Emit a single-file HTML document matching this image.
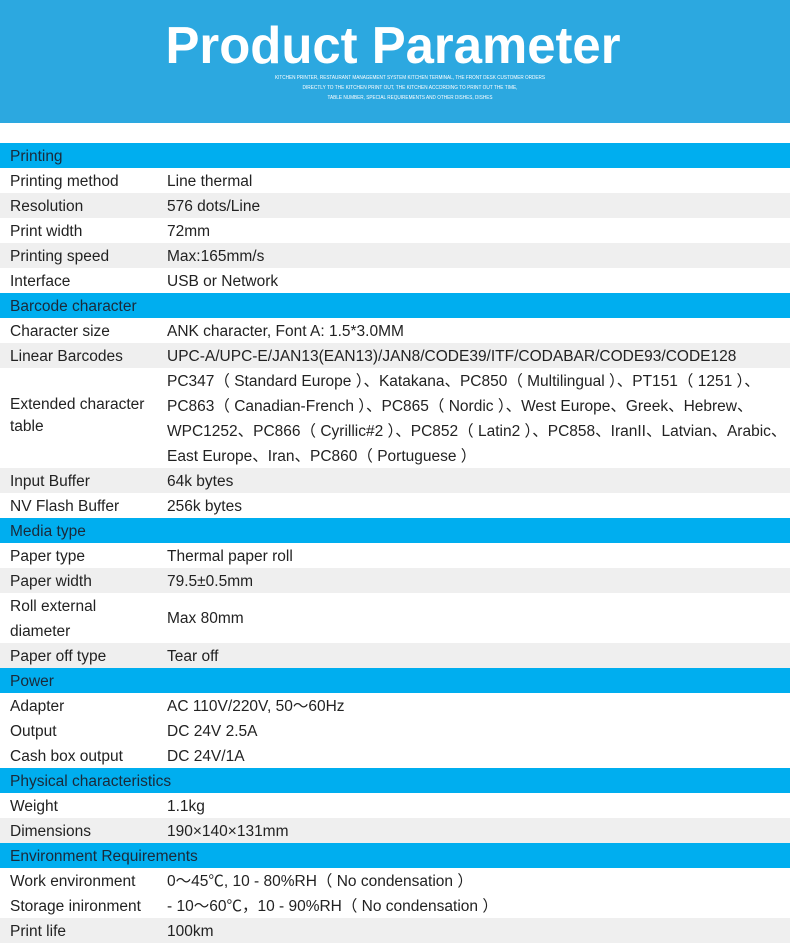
<!DOCTYPE html>
<html><head><meta charset="utf-8"><style>
*{margin:0;padding:0;box-sizing:border-box}
body{width:790px;height:947px;background:#fff;overflow:hidden;position:relative;font-family:"Liberation Sans","Noto Sans CJK SC",sans-serif;color:#222;font-size:15.5px}
.hd{position:absolute;left:0;top:0;width:790px;height:123px;background:#2ca8e0}
.r{position:absolute;left:0;width:790px;height:25px;line-height:27px;white-space:nowrap}
.s{background:#00aeef;color:#1a2a3a}
.g{background:#efefef}
.w{background:#fff}
.a{position:absolute;left:10px;top:0}
.b{position:absolute;left:167px;top:0}
</style></head><body>
<div class="hd">
<svg width="790" height="123" style="position:absolute;left:0;top:0">
<text x="393" y="63" text-anchor="middle" font-family="Liberation Sans" font-weight="bold" font-size="52" fill="#fff" textLength="455" lengthAdjust="spacingAndGlyphs">Product Parameter</text>
<text x="410" y="79" text-anchor="middle" font-family="Liberation Sans" font-size="5" fill="#fff" textLength="270" lengthAdjust="spacingAndGlyphs">KITCHEN PRINTER, RESTAURANT MANAGEMENT SYSTEM KITCHEN TERMINAL, THE FRONT DESK CUSTOMER ORDERS</text>
<text x="410" y="89" text-anchor="middle" font-family="Liberation Sans" font-size="5" fill="#fff" textLength="215" lengthAdjust="spacingAndGlyphs">DIRECTLY TO THE KITCHEN PRINT OUT, THE KITCHEN ACCORDING TO PRINT OUT THE TIME,</text>
<text x="410" y="99" text-anchor="middle" font-family="Liberation Sans" font-size="5" fill="#fff" textLength="165" lengthAdjust="spacingAndGlyphs">TABLE NUMBER, SPECIAL REQUIREMENTS AND OTHER DISHES, DISHES</text>
</svg></div>

<div class="r s" style="top:143px"><span class="a">Printing</span></div>
<div class="r w" style="top:168px"><span class="a">Printing method</span><span class="b">Line thermal</span></div>
<div class="r g" style="top:193px"><span class="a">Resolution</span><span class="b">576 dots/Line</span></div>
<div class="r w" style="top:218px"><span class="a">Print width</span><span class="b">72mm</span></div>
<div class="r g" style="top:243px"><span class="a">Printing speed</span><span class="b">Max:165mm/s</span></div>
<div class="r w" style="top:268px"><span class="a">Interface</span><span class="b">USB or Network</span></div>
<div class="r s" style="top:293px"><span class="a">Barcode character</span></div>
<div class="r w" style="top:318px"><span class="a">Character size</span><span class="b">ANK character, Font A: 1.5*3.0MM</span></div>
<div class="r g" style="top:343px"><span class="a">Linear Barcodes</span><span class="b">UPC-A/UPC-E/JAN13(EAN13)/JAN8/CODE39/ITF/CODABAR/CODE93/CODE128</span></div>
<div class="r w" style="top:368px;height:100px">
<span class="a" style="top:26px;line-height:22px;white-space:normal;width:150px">Extended character table</span>
<span class="b">PC347（ Standard Europe ）、Katakana、PC850（ Multilingual ）、PT151（ 1251 ）、</span>
<span class="b" style="top:25px">PC863（ Canadian-French ）、PC865（ Nordic ）、West Europe、Greek、Hebrew、</span>
<span class="b" style="top:50px">WPC1252、PC866（ Cyrillic#2 ）、PC852（ Latin2 ）、PC858、IranII、Latvian、Arabic、</span>
<span class="b" style="top:75px">East Europe、Iran、PC860（ Portuguese ）</span>
</div>
<div class="r g" style="top:468px"><span class="a">Input Buffer</span><span class="b">64k bytes</span></div>
<div class="r w" style="top:493px"><span class="a">NV Flash Buffer</span><span class="b">256k bytes</span></div>
<div class="r s" style="top:518px"><span class="a">Media type</span></div>
<div class="r w" style="top:543px"><span class="a">Paper type</span><span class="b">Thermal paper roll</span></div>
<div class="r g" style="top:568px"><span class="a">Paper width</span><span class="b">79.5±0.5mm</span></div>
<div class="r w" style="top:593px;height:50px"><span class="a">Roll external</span><span class="a" style="top:25px">diameter</span><span class="b" style="top:12px">Max 80mm</span></div>
<div class="r g" style="top:643px"><span class="a">Paper off type</span><span class="b">Tear off</span></div>
<div class="r s" style="top:668px"><span class="a">Power</span></div>
<div class="r w" style="top:693px"><span class="a">Adapter</span><span class="b">AC 110V/220V, 50～60Hz</span></div>
<div class="r w" style="top:718px"><span class="a">Output</span><span class="b">DC 24V 2.5A</span></div>
<div class="r w" style="top:743px"><span class="a">Cash box output</span><span class="b">DC 24V/1A</span></div>
<div class="r s" style="top:768px"><span class="a">Physical characteristics</span></div>
<div class="r w" style="top:793px"><span class="a">Weight</span><span class="b">1.1kg</span></div>
<div class="r g" style="top:818px"><span class="a">Dimensions</span><span class="b">190×140×131mm</span></div>
<div class="r s" style="top:843px"><span class="a">Environment Requirements</span></div>
<div class="r w" style="top:868px"><span class="a">Work environment</span><span class="b">0～45℃, 10 - 80%RH（ No condensation ）</span></div>
<div class="r w" style="top:893px"><span class="a">Storage inironment</span><span class="b">- 10～60℃，10 - 90%RH（ No condensation ）</span></div>
<div class="r g" style="top:918px"><span class="a">Print life</span><span class="b">100km</span></div>
</body></html>
